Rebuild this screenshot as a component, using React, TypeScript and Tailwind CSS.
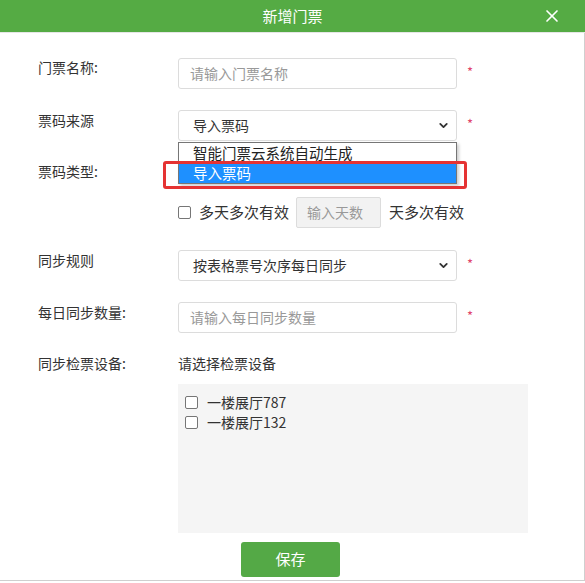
import { ChevronDown, X } from "lucide-react";

const font = { fontFamily: '"Microsoft YaHei", "Noto Sans CJK SC", "Liberation Sans", sans-serif' };

const Star = () => <span className="ml-[10px] mt-[7px] text-[13px] leading-none text-[#e0456b]">*</span>;

const Label = ({ text, className = "" }: { text: string; className?: string }) => (
  <div className={`w-[178px] shrink-0 pl-[38px] text-[14px] leading-[20px] text-[#333] ${className}`}>{text}</div>
);

const TextInput = ({ placeholder }: { placeholder: string }) => (
  <div className="flex h-[31px] w-[279px] items-center rounded-[3px] border border-[#dcdcdc] bg-white pl-[11px] text-[14px] text-[#999]">
    {placeholder}
  </div>
);

const Select = ({ value }: { value: string }) => (
  <div className="flex h-[31px] w-[279px] items-center justify-between rounded-[3px] border border-[#dcdcdc] bg-white pl-[14px] pr-[6px] text-[14px] text-[#333]">
    <span>{value}</span>
    <ChevronDown size={13} strokeWidth={3.4} className="text-[#333]" />
  </div>
);

const Checkbox = () => (
  <span className="inline-block h-[13px] w-[13px] shrink-0 rounded-[2px] border border-[#767676] bg-white" />
);

export default function App() {
  return (
    <div style={font} className="relative h-[583px] w-[585px] overflow-hidden bg-white">
      {/* header */}
      <div className="relative flex h-[33px] items-center justify-center border-b border-[#e6e6e6] bg-[#55ab44]">
        <span className="text-[15px] text-white">新增门票</span>
        <X size={20} strokeWidth={2} className="absolute right-[23px] top-[6px] text-white" />
      </div>

      <div className="border-r border-[#cfcfcf] border-b pt-[25px] pb-[3px]">
        {/* 门票名称 */}
        <div className="flex items-start">
          <Label text="门票名称:" className="mt-[-1px]" />
          <TextInput placeholder="请输入门票名称" />
          <Star />
        </div>

        {/* 票码来源 */}
        <div className="relative mt-[21px] flex items-start">
          <Label text="票码来源" />
          <Select value="导入票码" />
          <Star />
        </div>

        {/* 票码类型 */}
        <div className="mt-[20px] flex">
          <Label text="票码类型:" />
        </div>
        <div className="mt-[16px] flex items-center pl-[178px] text-[15px] text-[#333]">
          <Checkbox />
          <span className="ml-[8px]">多天多次有效</span>
          <div className="ml-[7px] flex h-[31px] w-[85px] items-center rounded-[2px] border border-[#dcdcdc] bg-[#f2f2f2] pl-[10px] text-[14px] text-[#999]">
            输入天数
          </div>
          <span className="ml-[8px]">天多次有效</span>
        </div>

        {/* 同步规则 */}
        <div className="mt-[22px] flex items-start">
          <Label text="同步规则" />
          <Select value="按表格票号次序每日同步" />
          <Star />
        </div>

        {/* 每日同步数量 */}
        <div className="mt-[21px] flex items-start">
          <Label text="每日同步数量:" />
          <TextInput placeholder="请输入每日同步数量" />
          <Star />
        </div>

        {/* 同步检票设备 */}
        <div className="mt-[20px] flex items-start">
          <Label text="同步检票设备:" />
          <span className="text-[14px] leading-[20px] text-[#333]">请选择检票设备</span>
        </div>
        <div className="ml-[178px] mt-[11px] h-[149px] w-[350px] bg-[#f5f5f5] pl-[7px] pt-[8px] text-[14px] text-[#333]">
          <div className="flex h-[20px] items-center gap-[9px]">
            <Checkbox />
            <span>一楼展厅787</span>
          </div>
          <div className="flex h-[20px] items-center gap-[9px]">
            <Checkbox />
            <span>一楼展厅132</span>
          </div>
        </div>

        <div className="mt-[9px] pl-[241px]">
          <button className="h-[35px] w-[99px] rounded-[3px] bg-[#54a946] text-[15px] text-white">保存</button>
        </div>
      </div>

      {/* open select dropdown */}
      <div className="absolute left-[178px] top-[142px] w-[279px] border border-[#767676] bg-white text-[14.5px] shadow-[2px_2px_3px_rgba(0,0,0,0.2)]">
        <div className="flex h-[20px] items-center pl-[14px] text-[#222]">智能门票云系统自动生成</div>
        <div className="flex h-[20px] items-center bg-[#1e90ff] pl-[14px] text-white">导入票码</div>
      </div>
      {/* annotation highlight */}
      <div className="absolute left-[163px] top-[161px] h-[28px] w-[304px] rounded-[3px] border-[3px] border-[#e53333]" />
    </div>
  );
}
